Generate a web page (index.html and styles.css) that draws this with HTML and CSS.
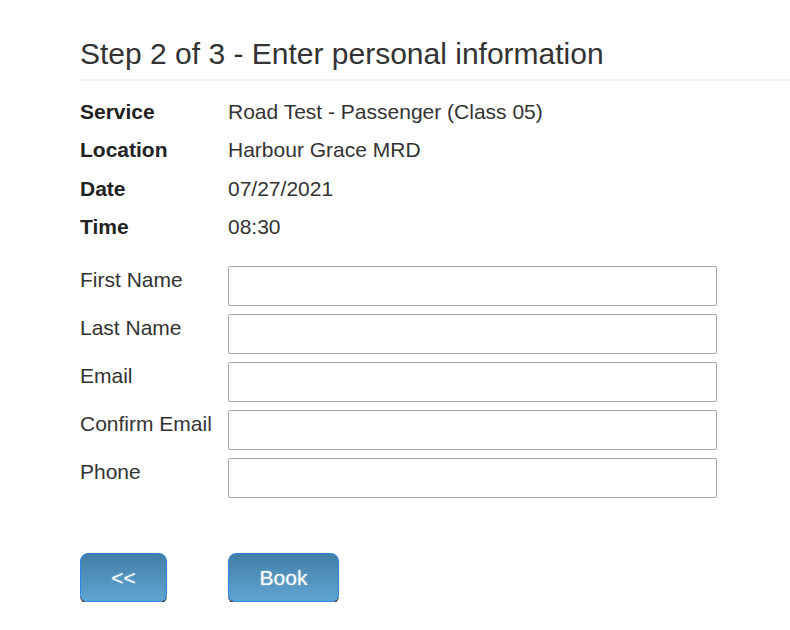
FILE: index.html
```html
<!DOCTYPE html>
<html>
<head>
<meta charset="utf-8">
<link rel="stylesheet" href="styles.css">
</head>
<body>
<div class="page">
  <h1 class="title">Step 2 of 3 - Enter personal information</h1>
  <div class="details">
    <div class="dl">Service</div><div class="dv">Road Test - Passenger (Class 05)</div>
    <div class="dl">Location</div><div class="dv">Harbour Grace MRD</div>
    <div class="dl">Date</div><div class="dv">07/27/2021</div>
    <div class="dl">Time</div><div class="dv">08:30</div>
  </div>
  <div class="form">
    <label class="fl">First Name</label><input class="fi" type="text">
    <label class="fl">Last Name</label><input class="fi" type="text">
    <label class="fl">Email</label><input class="fi" type="text">
    <label class="fl">Confirm Email</label><input class="fi" type="text">
    <label class="fl">Phone</label><input class="fi" type="text">
  </div>
  <div class="actions">
    <button class="btn btn-back">&lt;&lt;</button>
    <button class="btn btn-book">Book</button>
  </div>
</div>
</body>
</html>
```

FILE: styles.css
```css
html, body {
  margin: 0;
  padding: 0;
  background: #fff;
}
body {
  font-family: "Liberation Sans", Arial, sans-serif;
  color: #333;
}
.page {
  padding: 37px 0 0 80px;
}
.title {
  margin: 0;
  font-size: 30px;
  font-weight: normal;
  line-height: 34px;
  color: #333;
  padding-bottom: 8px;
  border-bottom: 2px solid #f2f2f2;
}
.details {
  display: grid;
  grid-template-columns: 148px auto;
  grid-auto-rows: 38.3px;
  align-items: center;
  margin-top: 12px;
  font-size: 21px;
}
.dl {
  font-weight: bold;
  color: #222;
}
.dv {
  color: #333;
}
.form {
  display: grid;
  grid-template-columns: 148px 489px;
  row-gap: 8px;
  margin-top: 20px;
  font-size: 21px;
}
.fl {
  padding-top: 2px;
  color: #333;
  white-space: nowrap;
}
.fi {
  box-sizing: border-box;
  width: 489px;
  height: 40px;
  margin: 0;
  border: 1px solid #a9a9a9;
  border-radius: 2px;
  font-size: 16px;
}
.actions {
  display: flex;
  margin-top: 55px;
}
.btn {
  box-sizing: border-box;
  height: 49px;
  border: 1px solid #2a86e8;
  border-radius: 8px;
  background: linear-gradient(#437ea6, #5fa5d1);
  color: #fff;
  font-family: "Liberation Sans", Arial, sans-serif;
  font-size: 21px;
  box-shadow: 0 2px 0 #333;
  text-shadow: 0 0 2px rgba(220, 240, 255, 0.6);
  padding: 0;
}
.btn-back {
  width: 87px;
  margin-right: 61px;
}
.btn-book {
  width: 111px;
}
```
